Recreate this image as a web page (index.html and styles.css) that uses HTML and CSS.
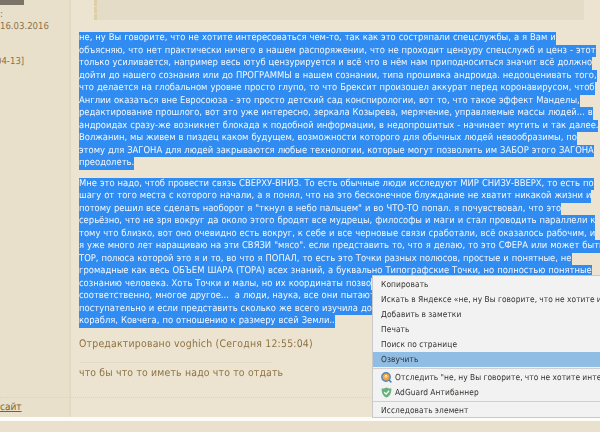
FILE: index.html
```html
<!DOCTYPE html>
<html lang="ru">
<head>
<meta charset="utf-8">
<title>Форум</title>
<link rel="stylesheet" href="styles.css">
</head>
<body>
<div class="page">
  <div class="post">
    <aside class="side">
      <div class="avatar"></div>
      <div class="side-colon">:</div>
      <div class="side-date">16.03.2016</div>
      <div class="side-range">04-13]</div>
      <div class="side-site"><a href="#">сайт</a></div>
    </aside>
    <main class="body">
      <div class="quote"></div>
      <div class="msg">
        <p class="para">
          <span class="ln">не, ну Вы говорите, что не хотите интересоваться чем-то, так как это состряпали спецслужбы, а я Вам и</span>
          <span class="ln">объясняю, что нет практически ничего в нашем распоряжении, что не проходит цензуру спецслужб и ценз - этот</span>
          <span class="ln">только усиливается, например весь ютуб цензурируется и всё что в нём нам приподноситься значит всё должно</span>
          <span class="ln">дойти до нашего сознания или до ПРОГРАММЫ в нашем сознании, типа прошивка андроида. недооценивать того,</span>
          <span class="ln">что делается на глобальном уровне просто глупо, то что Брексит произошел аккурат перед коронавирусом, чтоб</span>
          <span class="ln">Англии оказаться вне Евросоюза - это просто детский сад конспирологии, вот то, что такое эффект Манделы,</span>
          <span class="ln">редактирование прошлого, вот это уже интересно, зеркала Козырева, мерячение, управляемые массы людей... в</span>
          <span class="ln">андроидах сразу-же возникнет блокада к подобной информации, в недопрошитых - начинает мутить и так далее.</span>
          <span class="ln">Волжанин, мы живем в пиздец каком будущем, возможности которого для обычных людей невообразимы, по</span>
          <span class="ln">этому для ЗАГОНА для людей закрываются любые технологии, которые могут позволить им ЗАБОР этого ЗАГОНА</span>
          <span class="ln">преодолеть.</span>
        </p>
        <p class="para">
          <span class="ln">Мне это надо, чтоб провести связь СВЕРХУ-ВНИЗ. То есть обычные люди исследуют МИР СНИЗУ-ВВЕРХ, то есть по</span>
          <span class="ln">шагу от того места с которого начали, а я понял, что на это бесконечное блуждание не хватит никакой жизни и</span>
          <span class="ln">потому решил все сделать наоборот я "ткнул в небо пальцем" и во ЧТО-ТО попал. я почувствовал, что это</span>
          <span class="ln">серьёзно, что не зря вокруг да около этого бродят все мудрецы, философы и маги и стал проводить параллели к</span>
          <span class="ln">тому что близко, вот оно очевидно есть вокруг, к себе и все черновые связи сработали, всё оказалось рабочим, и</span>
          <span class="ln">я уже много лет наращиваю на эти СВЯЗИ "мясо". если представить то, что я делаю, то это СФЕРА или может быть</span>
          <span class="ln">ТОР, полюса которой это я и то, во что я ПОПАЛ, то есть это Точки разных полюсов, простые и понятные, не</span>
          <span class="ln">громадные как весь ОБЪЕМ ШАРА (ТОРА) всех знаний, а буквально Типографские Точки, но полностью понятные</span>
          <span class="ln">сознанию человека. Хоть Точки и малы, но их координаты позво</span>
          <span class="ln">соответственно, многое другое...&nbsp; а люди, наука, все они пытают</span>
          <span class="ln">поступательно и если представить сколько же всего изучила дос</span>
          <span class="ln">корабля, Ковчега, по отношению к размеру всей Земли..</span>
        </p>
        <div class="edited">Отредактировано voghich (Сегодня 12:55:04)</div>
        <div class="sig">что бы что то иметь надо что то отдать</div>
      </div>
    </main>
  </div>
  <div class="rule"></div>
  <div class="stripe"></div>
</div>

<nav class="menu">
  <div class="mi">Копировать</div>
  <div class="mi">Искать в Яндексе «не, ну Вы говорите, что не хотите инте</div>
  <div class="mi">Добавить в заметки</div>
  <div class="mi">Печать</div>
  <div class="mi">Поиск по странице</div>
  <div class="mi mi-on">Озвучить</div>
  <div class="sep"></div>
  <div class="mi mi-icon">
    <svg class="ic" viewBox="0 0 11 11"><circle cx="5" cy="5" r="4.2" fill="#f3a545" stroke="#4f86b8" stroke-width="1.4"/><path d="M5 3v3M3.6 4.4 5 3l1.4 1.4" fill="none" stroke="#fff" stroke-width=".9"/><path d="M8 8l2.4 2.4" stroke="#4f86b8" stroke-width="1.6"/></svg>
    Отследить "не, ну Вы говорите, что не хотите интерес
  </div>
  <div class="mi mi-icon">
    <svg class="ic" viewBox="0 0 11 11"><path d="M5.5 .4C3.8 1.3 2 1.6.6 1.6c0 4.5 1.4 7.6 4.9 9 3.5-1.4 4.9-4.5 4.9-9-1.4 0-3.2-.3-4.9-1.2z" fill="#67b279"/><path d="M3.2 5.2l1.9 1.9 3-3.3" fill="none" stroke="#fff" stroke-width="1.3"/></svg>
    AdGuard Антибаннер
  </div>
  <div class="sep sep-b"></div>
  <div class="mi">Исследовать элемент</div>
</nav>
</body>
</html>
```

FILE: styles.css
```css
html, body {
  margin: 0;
  height: 100%;
  overflow: hidden;
  background: #e9e0cd;
}
body {
  font-family: "DejaVu Sans Condensed", "DejaVu Sans", sans-serif;
  font-size: 10.4px;
  color: #8d7243;
  text-rendering: geometricPrecision;
}
.page {
  height: 432px;
  display: flex;
  flex-direction: column;
  position: relative;
  overflow: hidden;
  filter: blur(.35px);
}
.post {
  height: 417px;
  display: flex;
  flex: none;
}
.side {
  width: 69px;
  flex: none;
  background: #e9e0cc;
  border-right: 2px solid #e3dac4;
  overflow: hidden;
  font-size: 9.5px;
}
.avatar {
  width: 24px;
  height: 5px;
  background: #7a7468;
  margin-bottom: 4px;
}
.side-colon { height: 11px; line-height: 11px; }
.side-date { height: 14px; line-height: 14px; white-space: nowrap; }
.side-range { margin-top: 21px; margin-left: -4px; line-height: 14px; white-space: nowrap; }
.side-site { margin-top: 332px; line-height: 13px; font-size: 10px; }
.side-site a { color: #7b5f30; }
.body {
  flex: 1;
  background: #ece4d1;
  min-width: 0;
}
.quote {
  height: 20px;
  width: 487px;
  margin-left: 23px;
  background: #e4dcc7;
  border-left: 3px dashed #decfa9;
}
.msg {
  padding: 12px 0 0 8px;
}
.para {
  margin: 0 0 8px;
  line-height: 12.5px;
  font-size: 9.36px;
  word-spacing: .32px;
}
.ln {
  display: block;
  width: fit-content;
  white-space: nowrap;
  background: #308cf0;
  color: #f4f8ff;
}
.edited {
  margin-top: 9px;
  line-height: 14px;
  letter-spacing: .22px;
}
.sig {
  width: 194px;
  margin-top: 11px;
  padding-top: 3px;
  border-top: 1px solid #e3dac4;
  line-height: 14px;
  white-space: nowrap;
  letter-spacing: .18px;
}
.rule {
  position: absolute;
  left: 0;
  right: 0;
  top: 397px;
  border-top: 1px dotted #dcd3bd;
}
.stripe {
  height: 4px;
  flex: none;
  background: #fdfcf9;
}
.menu {
  position: absolute;
  left: 372px;
  top: 275px;
  width: 232px;
  height: 143px;
  box-sizing: border-box;
  padding-top: 1px;
  background: #f2f2f2;
  border: 1px solid #c9c9c9;
  color: #33322f;
  font-size: 8.3px;
  word-spacing: -.3px;
  overflow: hidden;
  filter: blur(.3px);
}
.mi {
  height: 15px;
  line-height: 15px;
  padding-left: 8px;
  white-space: nowrap;
  letter-spacing: .1px;
}
.mi-on { background: #90bde4; }
.mi-icon {
  display: flex;
  align-items: center;
  gap: 3px;
}
.ic { width: 11px; height: 11px; flex: none; }
.sep {
  height: 1px;
  margin: 1px 0 1px;
  background: #cfcfcf;
}
.sep-b { margin: 1px 0 1px; }
```
